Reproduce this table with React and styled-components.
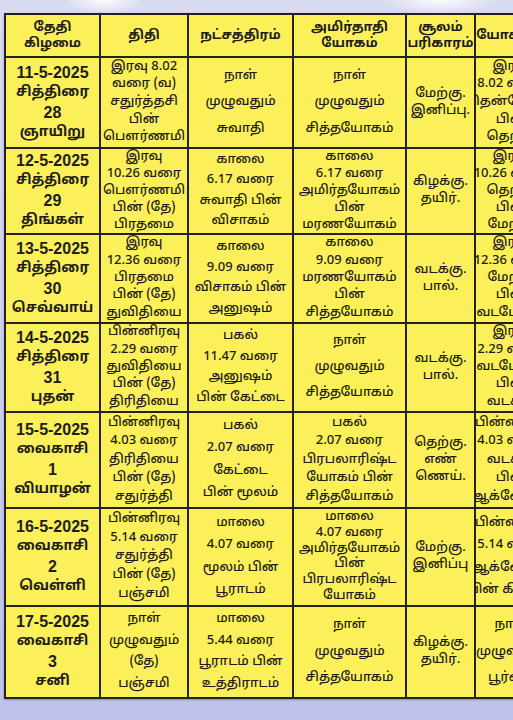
import React from 'react';
import styled, { createGlobalStyle } from 'styled-components';

const GlobalStyle = createGlobalStyle`
  html, body {
    margin: 0;
    padding: 0;
    height: 100%;
    overflow: hidden;
  }
  body {
    background:
      radial-gradient(ellipse 40px 14px at 104px 0px, rgba(255,255,255,0.95), rgba(255,255,255,0) 100%),
      radial-gradient(ellipse 60px 14px at 440px 0px, rgba(255,255,255,0.9), rgba(255,255,255,0) 100%),
      linear-gradient(180deg, #dadaf0 0%, #cdcfee 50%, #bec2ea 100%);
    font-family: "Noto Sans Tamil", "Lohit Tamil", "Noto Sans", "DejaVu Sans", sans-serif;
    color: #1d1d1b;
  }
`;

const Page = styled.div`
  width: 513px;
  height: 720px;
  padding: 13px 0 0 4px;
  box-sizing: border-box;
  overflow: hidden;
`;

const Grid = styled.div`
  display: grid;
  grid-template-columns: 93px 86px 103px 111px 67px 70px;
  grid-template-rows: 41px 89px 84px 87px 87px 94px 96px 90px;
  gap: 2px;
  padding: 2px;
  width: max-content;
  background: #23231c;
  box-shadow: 0 1px 2px rgba(40, 40, 80, 0.35);
`;

const Cell = styled.div`
  background: #fcf05a;
  display: flex;
  flex-direction: column;
  align-items: center;
  justify-content: ${(p) => (p.$spread ? 'space-evenly' : 'center')};
  text-align: center;
  font-size: 13px;
  font-weight: 500;
  line-height: ${(p) => (p.$tight ? '15px' : '17px')};
  padding: 0 2px;
  overflow: hidden;
  white-space: nowrap;
`;

const DayCell = styled(Cell)`
  font-size: 14px;
  font-weight: 700;
  line-height: 20px;
`;

const HeadCell = styled(Cell)`
  font-size: 13px;
  font-weight: 700;
  line-height: 16px;
`;

const DateLine = styled.span`
  font-family: "Liberation Sans", Arial, sans-serif;
  font-size: 16px;
  font-weight: 700;
`;

const headers = [
  ['தேதி', 'கிழமை'],
  ['திதி'],
  ['நட்சத்திரம்'],
  ['அமிர்தாதி', 'யோகம்'],
  ['சூலம்', 'பரிகாரம்'],
  ['யோகினி'],
];

const rows = [
  {
    date: ['11-5-2025', 'சித்திரை', '28', 'ஞாயிறு'],
    thithi: ['இரவு 8.02', 'வரை (வ)', 'சதுர்த்தசி', 'பின்', 'பௌர்ணமி'],
    star: ['நாள்', 'முழுவதும்', 'சுவாதி'],
    yogam: ['நாள்', 'முழுவதும்', 'சித்தயோகம்'],
    soolam: ['மேற்கு.', 'இனிப்பு.'],
    last: ['இரவு', '8.02 வரை', 'தென்மேற்கு', 'பின்', 'தெற்கு'],
  },
  {
    date: ['12-5-2025', 'சித்திரை', '29', 'திங்கள்'],
    thithi: ['இரவு', '10.26 வரை', 'பௌர்ணமி', 'பின் (தே)', 'பிரதமை'],
    star: ['காலை', '6.17 வரை', 'சுவாதி பின்', 'விசாகம்'],
    yogam: ['காலை', '6.17 வரை', 'அமிர்தயோகம்', 'பின்', 'மரணயோகம்'],
    soolam: ['கிழக்கு.', 'தயிர்.'],
    last: ['இரவு', '10.26 வரை', 'தெற்கு', 'பின்', 'மேற்கு'],
  },
  {
    date: ['13-5-2025', 'சித்திரை', '30', 'செவ்வாய்'],
    thithi: ['இரவு', '12.36 வரை', 'பிரதமை', 'பின் (தே)', 'துவிதியை'],
    star: ['காலை', '9.09 வரை', 'விசாகம் பின்', 'அனுஷம்'],
    yogam: ['காலை', '9.09 வரை', 'மரணயோகம்', 'பின்', 'சித்தயோகம்'],
    soolam: ['வடக்கு.', 'பால்.'],
    last: ['இரவு', '12.36 வரை', 'மேற்கு', 'பின்', 'வடமேற்கு'],
  },
  {
    date: ['14-5-2025', 'சித்திரை', '31', 'புதன்'],
    thithi: ['பின்னிரவு', '2.29 வரை', 'துவிதியை', 'பின் (தே)', 'திரிதியை'],
    star: ['பகல்', '11.47 வரை', 'அனுஷம்', 'பின் கேட்டை'],
    yogam: ['நாள்', 'முழுவதும்', 'சித்தயோகம்'],
    soolam: ['வடக்கு.', 'பால்.'],
    last: ['இரவு', '2.29 வரை', 'வடமேற்கு', 'பின்', 'வடக்கு'],
  },
  {
    date: ['15-5-2025', 'வைகாசி', '1', 'வியாழன்'],
    thithi: ['பின்னிரவு', '4.03 வரை', 'திரிதியை', 'பின் (தே)', 'சதுர்த்தி'],
    star: ['பகல்', '2.07 வரை', 'கேட்டை', 'பின் மூலம்'],
    yogam: ['பகல்', '2.07 வரை', 'பிரபலாரிஷ்ட', 'யோகம் பின்', 'சித்தயோகம்'],
    soolam: ['தெற்கு.', 'எண்', 'ணெய்.'],
    last: ['பின்னிரவு', '4.03 வரை', 'வடக்கு', 'பின்', 'ஆக்னேயம்'],
  },
  {
    date: ['16-5-2025', 'வைகாசி', '2', 'வெள்ளி'],
    thithi: ['பின்னிரவு', '5.14 வரை', 'சதுர்த்தி', 'பின் (தே)', 'பஞ்சமி'],
    star: ['மாலை', '4.07 வரை', 'மூலம் பின்', 'பூராடம்'],
    yogam: ['மாலை', '4.07 வரை', 'அமிர்தயோகம்', 'பின்', 'பிரபலாரிஷ்ட', 'யோகம்'],
    soolam: ['மேற்கு.', 'இனிப்பு'],
    last: ['பின்னிரவு', '5.14 வரை', 'ஆக்னேயம்', 'பின் கிழக்கு'],
  },
  {
    date: ['17-5-2025', 'வைகாசி', '3', 'சனி'],
    thithi: ['நாள்', 'முழுவதும்', '(தே)', 'பஞ்சமி'],
    star: ['மாலை', '5.44 வரை', 'பூராடம் பின்', 'உத்திராடம்'],
    yogam: ['நாள்', 'முழுவதும்', 'சித்தயோகம்'],
    soolam: ['கிழக்கு.', 'தயிர்.'],
    last: ['நாள்', 'முழுவதும்', 'பூர்வம்'],
  },
];

const Lines = ({ items }) => items.map((t, i) => <span key={i}>{t}</span>);

const TextCell = ({ items, spread = true }) => (
  <Cell $spread={spread} $tight={items.length > 5}>
    <Lines items={items} />
  </Cell>
);

export default function App() {
  return (
    <>
      <GlobalStyle />
      <Page>
        <Grid>
          {headers.map((h, i) => (
            <HeadCell key={i}>
              <Lines items={h} />
            </HeadCell>
          ))}
          {rows.map((r) => (
            <React.Fragment key={r.date[0]}>
              <DayCell>
                <DateLine>{r.date[0]}</DateLine>
                <span>{r.date[1]}</span>
                <DateLine>{r.date[2]}</DateLine>
                <span>{r.date[3]}</span>
              </DayCell>
              <TextCell items={r.thithi} />
              <TextCell items={r.star} />
              <TextCell items={r.yogam} />
              <TextCell items={r.soolam} spread={false} />
              <TextCell items={r.last} />
            </React.Fragment>
          ))}
        </Grid>
      </Page>
    </>
  );
}
